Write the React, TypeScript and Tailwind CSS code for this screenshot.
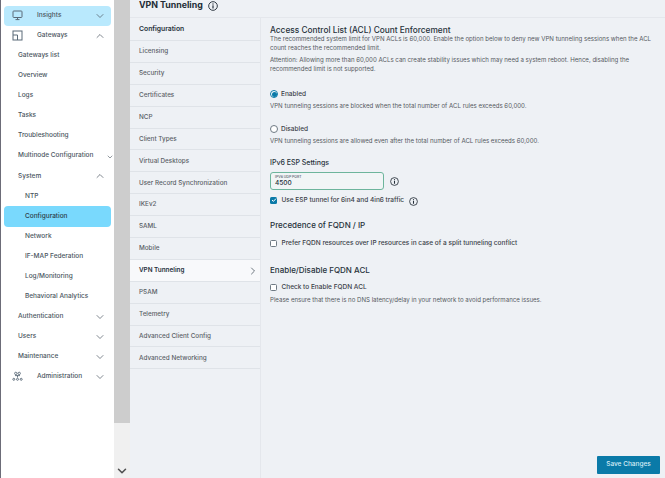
import { ChevronDown, ChevronUp, ChevronRight } from "lucide-react";

const Info = ({ size = 11 }: { size?: number }) => (
  <svg width={size} height={size} viewBox="0 0 12 12" fill="none" className="shrink-0">
    <circle cx="6" cy="6" r="5.2" stroke="#222c36" strokeWidth="1.1" />
    <rect x="5.3" y="5.2" width="1.4" height="3.8" fill="#222c36" />
    <rect x="5.3" y="2.9" width="1.4" height="1.4" fill="#222c36" />
  </svg>
);

type Side = { label: string; indent: 0 | 1 | 2 | 3; chev?: "up" | "down" | "small"; active?: "light" | "strong"; icon?: "monitor" | "gw" | "admin" };

const sideItems: Side[] = [
  { label: "Insights", indent: 3, chev: "down", active: "light", icon: "monitor" },
  { label: "Gateways", indent: 3, chev: "up", icon: "gw" },
  { label: "Gateways list", indent: 1 },
  { label: "Overview", indent: 1 },
  { label: "Logs", indent: 1 },
  { label: "Tasks", indent: 1 },
  { label: "Troubleshooting", indent: 1 },
  { label: "Multinode Configuration", indent: 1, chev: "small" },
  { label: "System", indent: 1, chev: "up" },
  { label: "NTP", indent: 2 },
  { label: "Configuration", indent: 2, active: "strong" },
  { label: "Network", indent: 2 },
  { label: "IF-MAP Federation", indent: 2 },
  { label: "Log/Monitoring", indent: 2 },
  { label: "Behavioral Analytics", indent: 2 },
  { label: "Authentication", indent: 1, chev: "down" },
  { label: "Users", indent: 1, chev: "down" },
  { label: "Maintenance", indent: 1, chev: "down" },
  { label: "Administration", indent: 3, chev: "down", icon: "admin" },
];

const SideIcon = ({ name }: { name: string }) => {
  if (name === "monitor")
    return (
      <svg width="11" height="11" viewBox="0 0 11 11" fill="none" stroke="#5a6a78" strokeWidth="1" className="absolute left-[8px] top-[4px]">
        <rect x="1" y="1" width="9" height="6.5" rx="0.8" />
        <path d="M3.5 9.6h4M5.5 7.5v2" />
      </svg>
    );
  if (name === "gw")
    return (
      <svg width="11" height="11" viewBox="0 0 11 11" fill="none" stroke="#5a6a78" strokeWidth="1" className="absolute left-[8px] top-[4px]">
        <rect x="1" y="1" width="9" height="9" />
        <path d="M1 5h4.5v5" />
      </svg>
    );
  return (
    <svg width="11" height="11" viewBox="0 0 11 11" fill="none" stroke="#5a6a78" strokeWidth="0.9" className="absolute left-[8px] top-[4px]">
      <circle cx="3.8" cy="2.4" r="1.2" />
      <circle cx="7.2" cy="2.4" r="1.2" />
      <path d="M3 4.6h5M5.5 4.6v2" />
      <circle cx="1.8" cy="8.3" r="1" />
      <circle cx="5.5" cy="8.3" r="1" />
      <circle cx="9.2" cy="8.3" r="1" />
    </svg>
  );
};

const SideRow = ({ item }: { item: Side }) => {
  const pad = item.indent === 1 ? "pl-[14px]" : item.indent === 2 ? "pl-[21px]" : "pl-[33px]";
  const bg = item.active === "light" ? "bg-[#b9e9fd]" : item.active === "strong" ? "bg-[#79d9fd]" : "";
  const color = item.active === "strong" ? "text-[#2b3a46]" : "text-[#4a5560]";
  return (
    <div className={`relative h-[20.05px] ml-[3px] w-[107px] rounded-[4px] flex items-center ${pad} ${bg} ${color} text-[6.5px] font-medium`}>
      {item.icon && <SideIcon name={item.icon} />}
      <span className="whitespace-nowrap">{item.label}</span>
      {item.chev === "down" && <ChevronDown size={12} strokeWidth={1.4} className="absolute right-[5px] text-[#4a5560]" />}
      {item.chev === "up" && <ChevronUp size={12} strokeWidth={1.4} className="absolute right-[5px] text-[#4a5560]" />}
      {item.chev === "small" && <ChevronDown size={8} strokeWidth={1.8} className="absolute right-[-3px] top-[7px] text-[#4a5560]" />}
    </div>
  );
};

const navItems = ["Licensing", "Security", "Certificates", "NCP", "Client Types", "Virtual Desktops", "User Record Synchronization", "IKEv2", "SAML", "Mobile", "VPN Tunneling", "PSAM", "Telemetry", "Advanced Client Config", "Advanced Networking"];

const Heading = ({ children, className = "" }: { children: React.ReactNode; className?: string }) => (
  <div className={`leading-[8px] font-medium text-[#27313b] ${className}`}>{children}</div>
);

const Desc = ({ children, className = "" }: { children: React.ReactNode; className?: string }) => (
  <div className={`text-[6.1px] leading-[9px] text-[#55595f] ${className}`}>{children}</div>
);

const Check = ({ checked = false }: { checked?: boolean }) => (
  <span className={`w-[7px] h-[7px] rounded-[1.5px] flex items-center justify-center shrink-0 ${checked ? "bg-[#0a7aa8]" : "bg-white border border-[#6f7a84]"}`}>
    {checked && (
      <svg width="6" height="6" viewBox="0 0 6 6" fill="none" stroke="white" strokeWidth="1">
        <path d="M1 3l1.4 1.4L5 1.6" />
      </svg>
    )}
  </span>
);

const Radio = ({ checked = false }: { checked?: boolean }) => (
  <span className={`w-[8px] h-[8px] rounded-full border flex items-center justify-center shrink-0 bg-white ${checked ? "border-[#0a7aa8]" : "border-[#6f7a84]"}`}>
    {checked && <span className="w-[5px] h-[5px] rounded-full bg-[#0a7aa8]" />}
  </span>
);

const Label = ({ children }: { children: React.ReactNode }) => (
  <span className="text-[6.5px] leading-[9px] font-medium text-[#3a4048] whitespace-nowrap">{children}</span>
);

export default function App() {
  return (
    <div className="w-[665px] h-[478px] overflow-hidden flex bg-[#eef1f5]" style={{ fontFamily: '"Inter", "Noto Sans", sans-serif' }}>
      <aside className="w-[114px] h-full shrink-0 bg-white border-l border-[#6c6c78] pt-[6px]">
        {sideItems.map((i) => (
          <SideRow key={i.label} item={i} />
        ))}
      </aside>

      <div className="w-[16px] h-full shrink-0 bg-[#f0f0f0] flex flex-col">
        <div className="h-[423px] bg-[#cdcdcd]" />
        <div className="flex-1 flex items-end justify-center">
          <ChevronDown size={14} strokeWidth={2.6} className="text-[#505050]" />
        </div>
      </div>

      <main className="flex-1 min-w-0 flex flex-col">
        <header className="h-[18px] shrink-0 border-b border-[#e4e7ec] pl-[9px] flex items-start gap-[5px]">
          <span className="text-[8.8px] leading-[10px] font-bold text-[#222c36]">VPN Tunneling</span>
          <span className="mt-[1px]"><Info size={10} /></span>
        </header>

        <div className="flex-1 flex min-h-0">
          <nav className="w-[131px] shrink-0 border-r border-[#e4e7ec]">
            <div className="h-[23px] pl-[9px] flex items-center border-b border-[#dfe3e8] text-[6.8px] font-semibold text-[#27313b]">Configuration</div>
            {navItems.map((n) => {
              const active = n === "VPN Tunneling";
              return (
                <div key={n} className={`h-[21.9px] pt-[1px] pl-[9px] pr-[1px] flex items-center justify-between border-b border-[#dfe3e8] text-[6.35px] ${active ? "bg-[#f8f9fb] text-[#27313b] font-semibold" : "text-[#5a5f66] font-medium"}`}>
                  <span className="whitespace-nowrap">{n}</span>
                  {active && <ChevronRight size={12} strokeWidth={1.6} className="text-[#4a5560]" />}
                </div>
              );
            })}
          </nav>

          <section className="relative flex-1 pl-[9px] pt-[8px]">
            <Heading className="text-[8.3px]">Access Control List (ACL) Count Enforcement</Heading>
            <Desc className="w-[392px]">The recommended system limit for VPN ACLs is 60,000. Enable the option below to deny new VPN tunneling sessions when the ACL count reaches the recommended limit.</Desc>
            <Desc className="w-[392px] mt-[3px]">Attention: Allowing more than 60,000 ACLs can create stability issues which may need a system reboot. Hence, disabling the recommended limit is not supported.</Desc>

            <div className="flex items-center gap-[3px] mt-[16.5px] h-[9px]">
              <Radio checked />
              <Label>Enabled</Label>
            </div>
            <Desc className="mt-[2.5px]">VPN tunneling sessions are blocked when the total number of ACL rules exceeds 60,000.</Desc>

            <div className="flex items-center gap-[3px] mt-[14.5px] h-[9px]">
              <Radio />
              <Label>Disabled</Label>
            </div>
            <Desc className="mt-[2px]">VPN tunneling sessions are allowed even after the total number of ACL rules exceeds 60,000.</Desc>

            <Heading className="mt-[14.5px] text-[7px]">IPv6 ESP Settings</Heading>
            <div className="flex items-center gap-[6px] mt-[5px]">
              <div className="w-[114px] h-[18px] rounded-[3px] border border-[#6db59c] bg-[#f1f5f6] pl-[4px] pt-[1.5px]">
                <div className="text-[3.5px] leading-[4px] font-medium text-[#4f5a65]">IPV6 UDP PORT</div>
                <div className="text-[6.5px] leading-[8px] font-medium text-[#27313b]">4500</div>
              </div>
              <Info size={9} />
            </div>
            <div className="flex items-center gap-[4.5px] mt-[5.5px] h-[9px]">
              <Check checked />
              <Label>Use ESP tunnel for 6in4 and 4in6 traffic</Label>
              <span className="mt-[3px]"><Info size={9} /></span>
            </div>

            <Heading className="mt-[16.5px] text-[8px]">Precedence of FQDN / IP</Heading>
            <div className="flex items-center gap-[4.5px] mt-[10px] h-[9px]">
              <Check />
              <Label>Prefer FQDN resources over IP resources in case of a split tunneling conflict</Label>
            </div>

            <Heading className="mt-[18px] text-[8px]">Enable/Disable FQDN ACL</Heading>
            <div className="flex items-center gap-[4.5px] mt-[9px] h-[9px]">
              <Check />
              <Label>Check to Enable FQDN ACL</Label>
            </div>
            <Desc className="mt-[2.5px]">Please ensure that there is no DNS latency/delay in your network to avoid performance issues.</Desc>

            <button className="absolute right-[5px] bottom-[4px] w-[63px] h-[18px] bg-[#0a7aa8] rounded-[1px] text-[6.5px] font-medium text-[#d7edf6]">Save Changes</button>
          </section>
        </div>
      </main>
    </div>
  );
}
